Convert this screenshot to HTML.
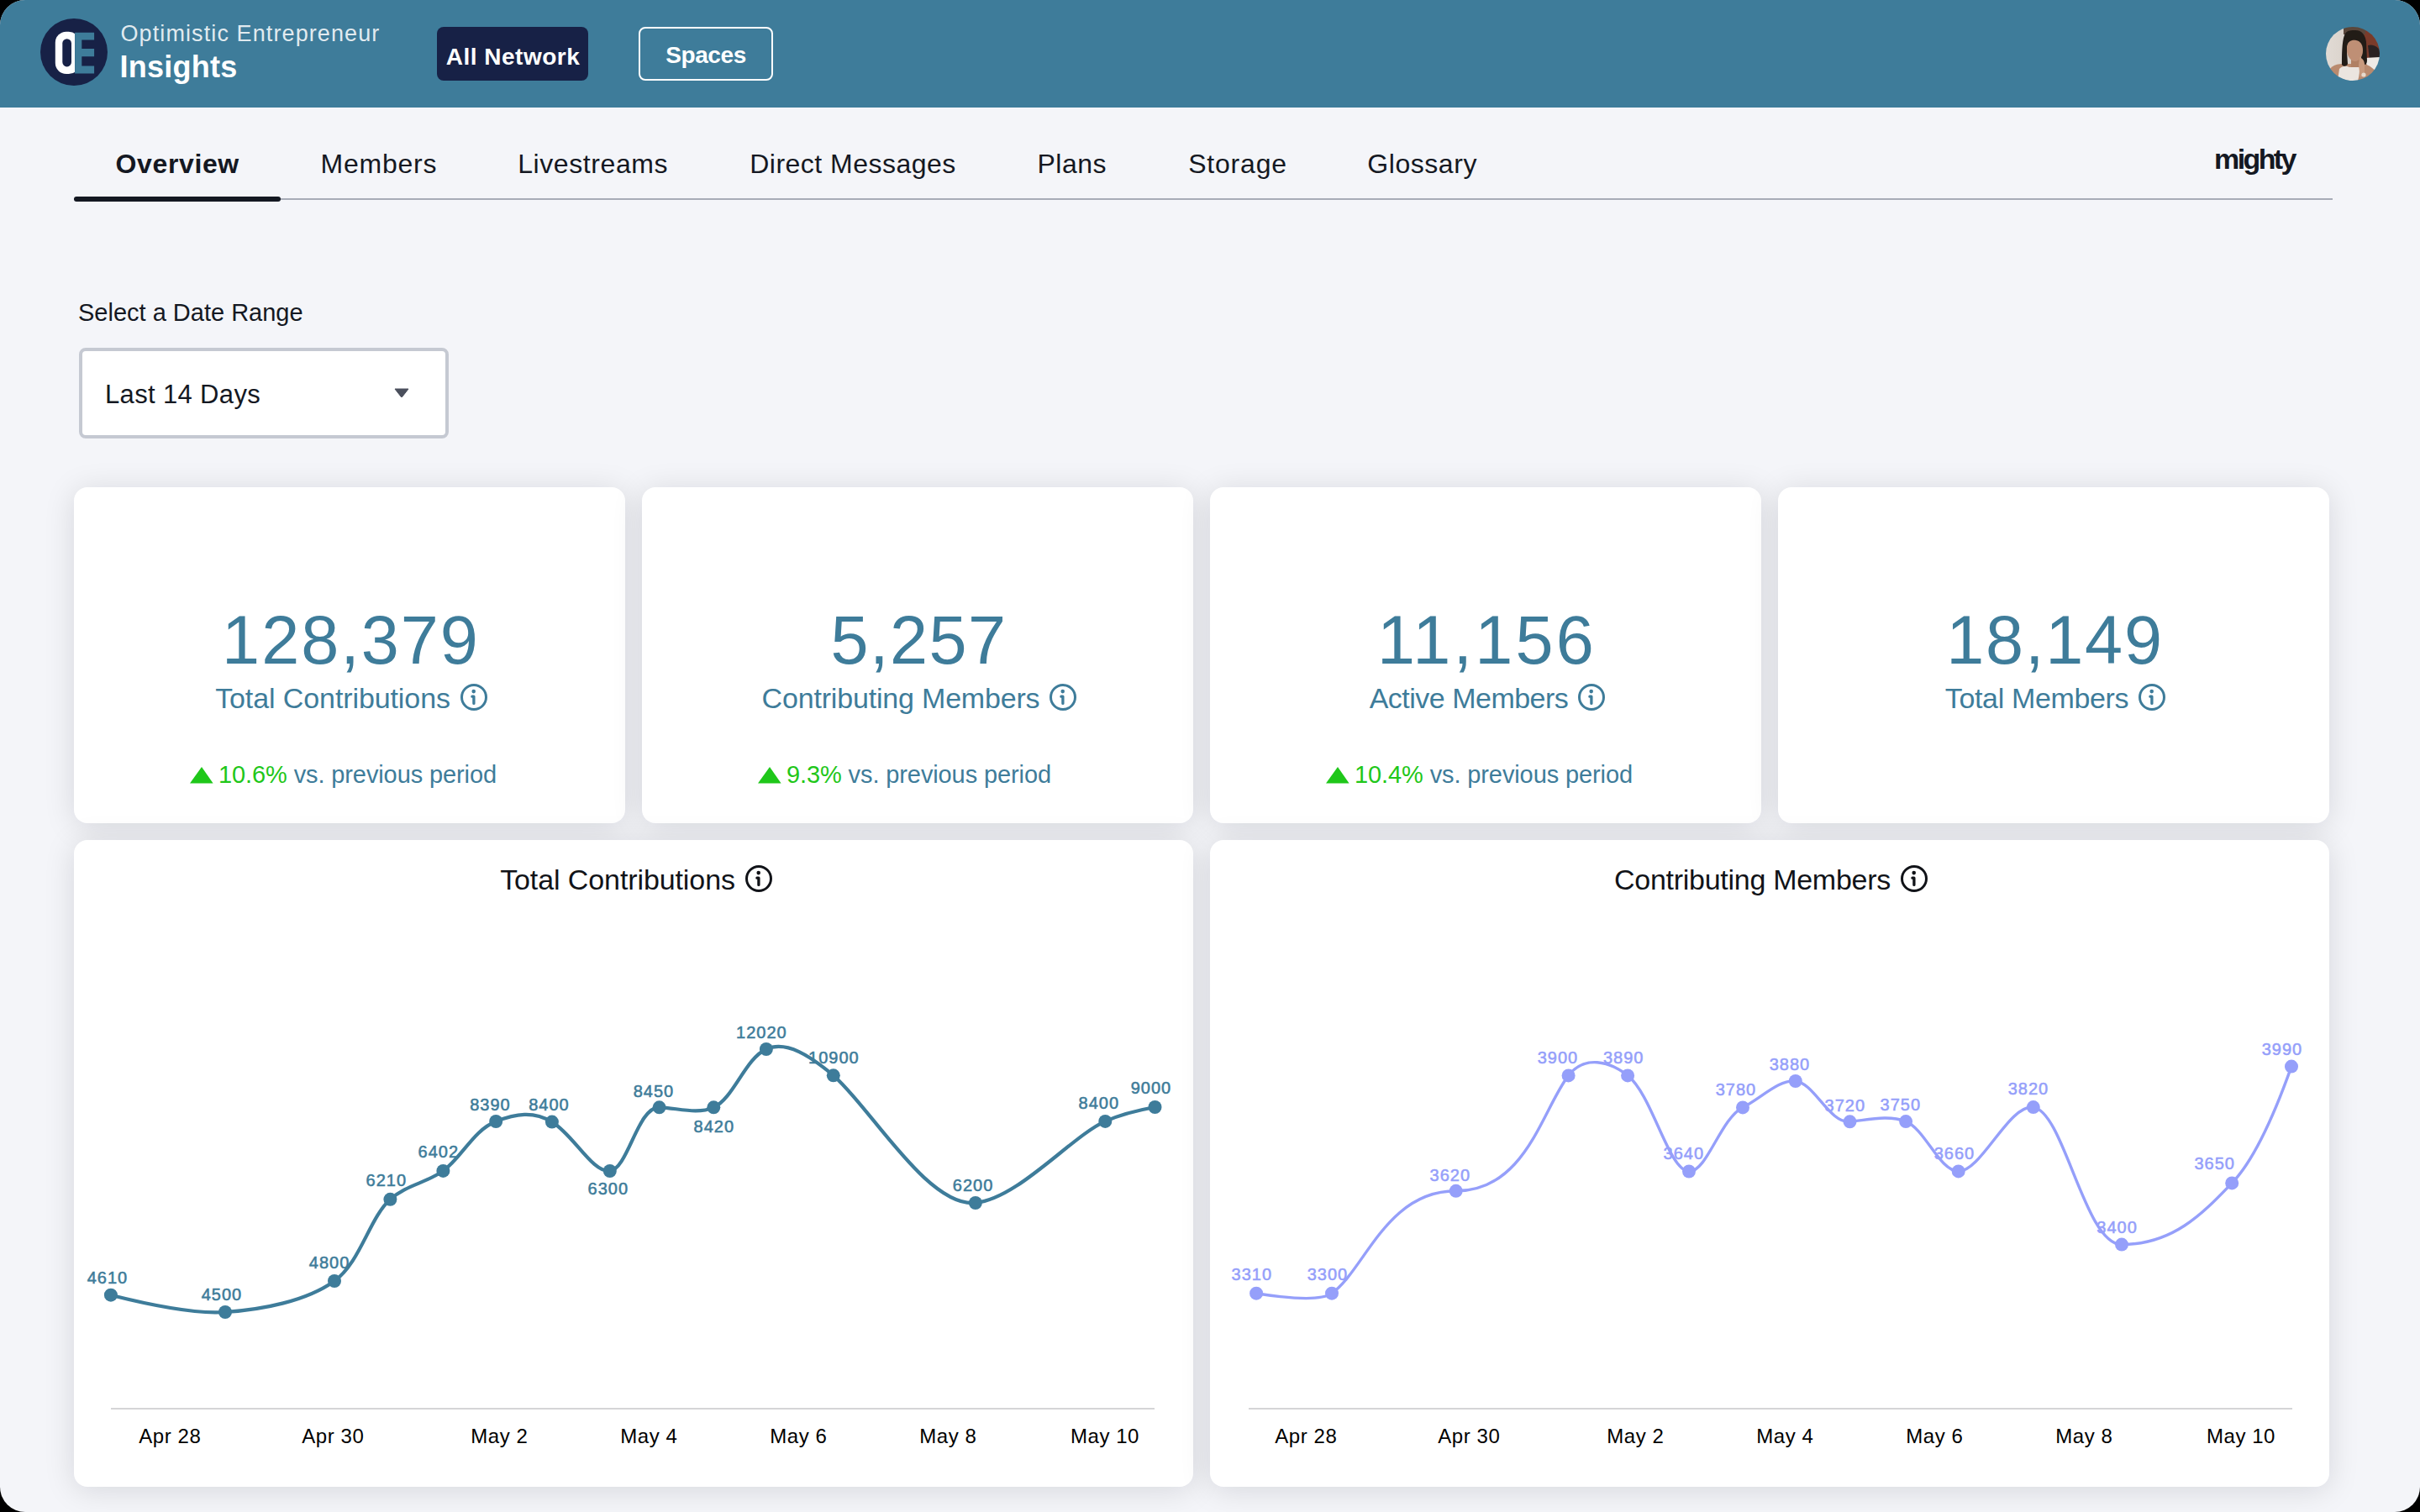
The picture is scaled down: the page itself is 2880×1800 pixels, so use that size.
<!DOCTYPE html>
<html><head><meta charset="utf-8"><title>Insights</title>
<style>
html,body{margin:0;padding:0;background:#000;}
body{width:2880px;height:1800px;overflow:hidden;position:relative;font-family:"Liberation Sans",sans-serif;}
#page{position:absolute;left:0;top:0;width:2880px;height:1800px;border-radius:30px;overflow:hidden;background:#f4f5f9;}
.t{position:absolute;white-space:nowrap;line-height:1;}
.abs{position:absolute;}
.card{position:absolute;background:#fff;border-radius:16px;box-shadow:0 4px 36px rgba(10,12,25,0.125);}
</style></head><body><div id="page">
<div class="abs" style="left:0;top:0;width:2880px;height:128px;background:#3e7c9a;"></div>
<svg class="abs" style="left:48px;top:22px" width="80" height="80" viewBox="48 22 80 80">
<circle cx="88" cy="62" r="40" fill="#172146"/>
<clipPath id="oclip"><rect x="60" y="30" width="29.1" height="64"/></clipPath><rect x="65.8" y="37.8" width="29" height="50.3" rx="13" ry="13" fill="#fff" clip-path="url(#oclip)"/>
<rect x="74.3" y="46.2" width="10.7" height="33.2" rx="5.35" fill="#172146"/>
<path d="M89.1,38.8 H112.1 V47.4 H97.3 V57.9 H112.1 V67.2 H97.3 V78.5 H112.1 V87.6 H89.1 Z" fill="#3e7c9a"/>
</svg>
<div class="t" style="left:143.5px;top:26.7px;font-size:27px;color:rgba(255,255,255,0.87);font-weight:400;letter-spacing:1.1px;">Optimistic Entrepreneur</div>
<div class="t" style="left:142.5px;top:61.5px;font-size:36px;color:#fff;font-weight:700;letter-spacing:0.25px;">Insights</div>
<div class="abs" style="left:520px;top:32px;width:180px;height:64px;border-radius:8px;background:#172146;"></div>
<div class="t" style="left:-389.5px;width:2000px;text-align:center;top:53.8px;font-size:28px;color:#fff;font-weight:700;letter-spacing:0.5px;">All Network</div>
<div class="abs" style="left:760px;top:32px;width:160px;height:64px;box-sizing:border-box;border-radius:8px;border:2px solid #fff;"></div>
<div class="t" style="left:-160.0px;width:2000px;text-align:center;top:51.7px;font-size:28px;color:#fff;font-weight:700;letter-spacing:-0.4px;">Spaces</div>
<svg class="abs" style="left:2768px;top:32px" width="64" height="64" viewBox="0 0 64 64">
<defs><clipPath id="av"><circle cx="32" cy="32" r="32"/></clipPath>
<linearGradient id="avbg" x1="0" y1="0" x2="1" y2="0"><stop offset="0" stop-color="#e2dcd6"/><stop offset="1" stop-color="#cfc5bb"/></linearGradient><filter id="avblur" x="-10%" y="-10%" width="120%" height="120%"><feGaussianBlur stdDeviation="0.7"/></filter></defs>
<g clip-path="url(#av)"><g filter="url(#avblur)">
<rect x="-4" y="-4" width="72" height="72" fill="url(#avbg)"/>
<path d="M36,0 H64 V48 L44,48 Z" fill="#7a3a2c"/>
<rect x="21" y="0" width="26" height="9" fill="#5a463a"/>
<path d="M50,22 C56,20 64,24 64,30 V40 L52,40 Z" fill="#2c2420"/>
<path d="M46,37 L64,36 V52 L50,50 Z" fill="#eeeae6"/>
<path d="M0,58 C4,48 10,44 20,44 L44,44 C52,45 58,50 62,58 L64,64 H0 Z" fill="#b98a6e"/>
<path d="M14,64 L16,50 C20,46 24,46 28,48 L40,48 C40,52 40,58 38,64 Z" fill="#ebe5df"/>
<rect x="30" y="36" width="10" height="12" fill="#b08064"/>
<path d="M22,10 C24,4 30,4 35,4 C43,4 47,10 48,18 L49,40 C49,44 47,46 45,44 L42,42 L42,24 C40,18 36,16 30,17 C26,18 25,24 25,30 L26,44 C25,47 21,48 19,45 C19,34 19,18 22,10 Z" fill="#231c18"/>
<path d="M25,24 C26,17 31,15 36,16 C41,17 44,21 44,28 C44,34 41,40 35,41 C30,41 26,36 25,30 Z" fill="#bf8f74"/>
<path d="M40,36 C43,37 46,40 46,45 L46,58 L41,60 L39,46 Z" fill="#c89a7e"/>
<circle cx="45" cy="57" r="2.6" fill="#e6dace"/>
</g></g></svg>
<div class="t" style="left:137.6px;top:178.9px;font-size:32px;color:#141822;font-weight:700;letter-spacing:0.61px;">Overview</div>
<div class="t" style="left:381.5px;top:178.9px;font-size:32px;color:#141822;font-weight:400;letter-spacing:0.77px;">Members</div>
<div class="t" style="left:616.2px;top:178.9px;font-size:32px;color:#141822;font-weight:400;letter-spacing:0.59px;">Livestreams</div>
<div class="t" style="left:892.2px;top:178.9px;font-size:32px;color:#141822;font-weight:400;letter-spacing:0.49px;">Direct Messages</div>
<div class="t" style="left:1234.5px;top:178.9px;font-size:32px;color:#141822;font-weight:400;letter-spacing:0.48px;">Plans</div>
<div class="t" style="left:1414.2px;top:178.9px;font-size:32px;color:#141822;font-weight:400;letter-spacing:0.8px;">Storage</div>
<div class="t" style="left:1627.3px;top:178.9px;font-size:32px;color:#141822;font-weight:400;letter-spacing:0.55px;">Glossary</div>
<div class="t" style="left:2635.0px;top:171.6px;font-size:34px;color:#141822;font-weight:700;letter-spacing:-2.6px;">mighty</div>
<div class="abs" style="left:88px;top:236px;width:2688px;height:2px;background:#a7acb7;"></div>
<div class="abs" style="left:88px;top:234px;width:246px;height:6px;border-radius:3px;background:#141822;"></div>
<div class="t" style="left:93.0px;top:358.2px;font-size:29px;color:#141822;font-weight:400;letter-spacing:0px;">Select a Date Range</div>
<div class="abs" style="left:94px;top:414px;width:440px;height:108px;box-sizing:border-box;border:4px solid #c5c9d2;border-radius:8px;background:#fff;"></div>
<div class="t" style="left:125.0px;top:454.2px;font-size:31px;color:#141822;font-weight:400;letter-spacing:0.35px;">Last 14 Days</div>
<svg class="abs" style="left:466px;top:459px" width="24" height="18" viewBox="0 0 24 18"><path d="M4,4 H20 L12.8,13.2 Q12,14.2 11.2,13.2 Z" fill="#4a4f5c" stroke="#4a4f5c" stroke-width="1" stroke-linejoin="round"/></svg>
<div class="card" style="left:88px;top:580px;width:656px;height:400px;"></div>
<div class="t" style="left:-582.5px;width:2000px;text-align:center;top:722.4px;font-size:81px;color:#3e7c9a;font-weight:400;letter-spacing:2.0px;">128,379</div>
<div class="t" style="left:-582px;width:2000px;text-align:center;top:814.2px;font-size:34px;color:#3e7c9a;letter-spacing:-0.1px;">Total Contributions<svg style="display:inline-block;vertical-align:-3px;margin-left:12px" width="32" height="32" viewBox="0 0 32 32"><circle cx="16" cy="16" r="14.5" fill="none" stroke="#3e7c9a" stroke-width="3"/><circle cx="15.7" cy="9.1" r="2.3" fill="#3e7c9a"/><path d="M13.9,15.2 H15.9 V23.4" fill="none" stroke="#3e7c9a" stroke-width="3.3" stroke-linecap="round" stroke-linejoin="round"/></svg></div>
<svg class="abs" style="left:226px;top:913px" width="28" height="20" viewBox="0 0 28 20"><path d="M14,0 L27.6,19.5 H0 Z" fill="#1fc71a"/></svg>
<div class="t" style="left:260.0px;top:908.0px;font-size:29px;color:#3e7c9a;font-weight:400;letter-spacing:-0.11px;"><span style="color:#1fc71a">10.6%</span> vs. previous period</div>
<div class="card" style="left:764px;top:580px;width:656px;height:400px;"></div>
<div class="t" style="left:93.5px;width:2000px;text-align:center;top:722.4px;font-size:81px;color:#3e7c9a;font-weight:400;letter-spacing:1.5px;">5,257</div>
<div class="t" style="left:94px;width:2000px;text-align:center;top:814.2px;font-size:34px;color:#3e7c9a;letter-spacing:-0.18px;">Contributing Members<svg style="display:inline-block;vertical-align:-3px;margin-left:12px" width="32" height="32" viewBox="0 0 32 32"><circle cx="16" cy="16" r="14.5" fill="none" stroke="#3e7c9a" stroke-width="3"/><circle cx="15.7" cy="9.1" r="2.3" fill="#3e7c9a"/><path d="M13.9,15.2 H15.9 V23.4" fill="none" stroke="#3e7c9a" stroke-width="3.3" stroke-linecap="round" stroke-linejoin="round"/></svg></div>
<svg class="abs" style="left:902px;top:913px" width="28" height="20" viewBox="0 0 28 20"><path d="M14,0 L27.6,19.5 H0 Z" fill="#1fc71a"/></svg>
<div class="t" style="left:936.0px;top:908.0px;font-size:29px;color:#3e7c9a;font-weight:400;letter-spacing:-0.11px;"><span style="color:#1fc71a">9.3%</span> vs. previous period</div>
<div class="card" style="left:1440px;top:580px;width:656px;height:400px;"></div>
<div class="t" style="left:769.5px;width:2000px;text-align:center;top:722.4px;font-size:81px;color:#3e7c9a;font-weight:400;letter-spacing:3.2px;">11,156</div>
<div class="t" style="left:770px;width:2000px;text-align:center;top:814.2px;font-size:34px;color:#3e7c9a;letter-spacing:-0.5px;">Active Members<svg style="display:inline-block;vertical-align:-3px;margin-left:12px" width="32" height="32" viewBox="0 0 32 32"><circle cx="16" cy="16" r="14.5" fill="none" stroke="#3e7c9a" stroke-width="3"/><circle cx="15.7" cy="9.1" r="2.3" fill="#3e7c9a"/><path d="M13.9,15.2 H15.9 V23.4" fill="none" stroke="#3e7c9a" stroke-width="3.3" stroke-linecap="round" stroke-linejoin="round"/></svg></div>
<svg class="abs" style="left:1578px;top:913px" width="28" height="20" viewBox="0 0 28 20"><path d="M14,0 L27.6,19.5 H0 Z" fill="#1fc71a"/></svg>
<div class="t" style="left:1612.0px;top:908.0px;font-size:29px;color:#3e7c9a;font-weight:400;letter-spacing:-0.11px;"><span style="color:#1fc71a">10.4%</span> vs. previous period</div>
<div class="card" style="left:2116px;top:580px;width:656px;height:400px;"></div>
<div class="t" style="left:1445.5px;width:2000px;text-align:center;top:722.4px;font-size:81px;color:#3e7c9a;font-weight:400;letter-spacing:1.8px;">18,149</div>
<div class="t" style="left:1446px;width:2000px;text-align:center;top:814.2px;font-size:34px;color:#3e7c9a;letter-spacing:-0.35px;">Total Members<svg style="display:inline-block;vertical-align:-3px;margin-left:12px" width="32" height="32" viewBox="0 0 32 32"><circle cx="16" cy="16" r="14.5" fill="none" stroke="#3e7c9a" stroke-width="3"/><circle cx="15.7" cy="9.1" r="2.3" fill="#3e7c9a"/><path d="M13.9,15.2 H15.9 V23.4" fill="none" stroke="#3e7c9a" stroke-width="3.3" stroke-linecap="round" stroke-linejoin="round"/></svg></div>
<div class="card" style="left:88px;top:1000px;width:1332px;height:770px;"></div>
<div class="card" style="left:1440px;top:1000px;width:1332px;height:770px;"></div>
<div class="t" style="left:-243px;width:2000px;text-align:center;top:1030.1px;font-size:34px;color:#111318;letter-spacing:-0.1px;">Total Contributions<svg style="display:inline-block;vertical-align:-3px;margin-left:12px" width="32" height="32" viewBox="0 0 32 32"><circle cx="16" cy="16" r="14.5" fill="none" stroke="#111318" stroke-width="3"/><circle cx="15.7" cy="9.1" r="2.3" fill="#111318"/><path d="M13.9,15.2 H15.9 V23.4" fill="none" stroke="#111318" stroke-width="3.3" stroke-linecap="round" stroke-linejoin="round"/></svg></div>
<div class="t" style="left:1107.5px;width:2000px;text-align:center;top:1030.1px;font-size:34px;color:#111318;letter-spacing:-0.28px;">Contributing Members<svg style="display:inline-block;vertical-align:-3px;margin-left:12px" width="32" height="32" viewBox="0 0 32 32"><circle cx="16" cy="16" r="14.5" fill="none" stroke="#111318" stroke-width="3"/><circle cx="15.7" cy="9.1" r="2.3" fill="#111318"/><path d="M13.9,15.2 H15.9 V23.4" fill="none" stroke="#111318" stroke-width="3.3" stroke-linecap="round" stroke-linejoin="round"/></svg></div>
<svg class="abs" style="left:0;top:0" width="2880" height="1800" viewBox="0 0 2880 1800"><rect x="132" y="1676" width="1242" height="2" fill="#d5d5d7"/><rect x="1486" y="1676" width="1242" height="2" fill="#d5d5d7"/><text x="128.0" y="1528.2" text-anchor="middle" font-family="Liberation Sans" font-size="20" letter-spacing="1" fill="#3e7c9a" stroke="#3e7c9a" stroke-width="0.55">4610</text><text x="263.9" y="1547.7" text-anchor="middle" font-family="Liberation Sans" font-size="20" letter-spacing="1" fill="#3e7c9a" stroke="#3e7c9a" stroke-width="0.55">4500</text><text x="392.1" y="1509.7" text-anchor="middle" font-family="Liberation Sans" font-size="20" letter-spacing="1" fill="#3e7c9a" stroke="#3e7c9a" stroke-width="0.55">4800</text><text x="459.8" y="1411.9" text-anchor="middle" font-family="Liberation Sans" font-size="20" letter-spacing="1" fill="#3e7c9a" stroke="#3e7c9a" stroke-width="0.55">6210</text><text x="521.8" y="1377.8" text-anchor="middle" font-family="Liberation Sans" font-size="20" letter-spacing="1" fill="#3e7c9a" stroke="#3e7c9a" stroke-width="0.55">6402</text><text x="583.5" y="1321.7" text-anchor="middle" font-family="Liberation Sans" font-size="20" letter-spacing="1" fill="#3e7c9a" stroke="#3e7c9a" stroke-width="0.55">8390</text><text x="653.5" y="1321.7" text-anchor="middle" font-family="Liberation Sans" font-size="20" letter-spacing="1" fill="#3e7c9a" stroke="#3e7c9a" stroke-width="0.55">8400</text><text x="723.8" y="1421.8" text-anchor="middle" font-family="Liberation Sans" font-size="20" letter-spacing="1" fill="#3e7c9a" stroke="#3e7c9a" stroke-width="0.55">6300</text><text x="777.9" y="1305.8" text-anchor="middle" font-family="Liberation Sans" font-size="20" letter-spacing="1" fill="#3e7c9a" stroke="#3e7c9a" stroke-width="0.55">8450</text><text x="849.8" y="1347.9" text-anchor="middle" font-family="Liberation Sans" font-size="20" letter-spacing="1" fill="#3e7c9a" stroke="#3e7c9a" stroke-width="0.55">8420</text><text x="906.4" y="1235.8" text-anchor="middle" font-family="Liberation Sans" font-size="20" letter-spacing="1" fill="#3e7c9a" stroke="#3e7c9a" stroke-width="0.55">12020</text><text x="992.4" y="1265.7" text-anchor="middle" font-family="Liberation Sans" font-size="20" letter-spacing="1" fill="#3e7c9a" stroke="#3e7c9a" stroke-width="0.55">10900</text><text x="1158.1" y="1417.7" text-anchor="middle" font-family="Liberation Sans" font-size="20" letter-spacing="1" fill="#3e7c9a" stroke="#3e7c9a" stroke-width="0.55">6200</text><text x="1307.8" y="1319.6" text-anchor="middle" font-family="Liberation Sans" font-size="20" letter-spacing="1" fill="#3e7c9a" stroke="#3e7c9a" stroke-width="0.55">8400</text><text x="1369.9" y="1302.0" text-anchor="middle" font-family="Liberation Sans" font-size="20" letter-spacing="1" fill="#3e7c9a" stroke="#3e7c9a" stroke-width="0.55">9000</text><path d="M131.90,1541.70Q223.46,1564.88 268.00,1562.00C312.14,1559.14 364.81,1548.91 398.00,1525.00C428.97,1502.68 439.57,1450.14 464.40,1427.80C483.76,1410.39 507.31,1408.35 527.40,1393.90C549.43,1378.05 563.48,1345.43 590.20,1335.00C613.72,1325.82 634.72,1322.29 656.90,1335.60C682.71,1351.08 704.77,1396.19 725.80,1394.00C747.46,1391.75 758.72,1317.52 784.60,1318.30C805.86,1318.94 829.64,1327.03 849.30,1318.30C872.92,1307.81 886.76,1260.32 911.90,1249.00C936.00,1238.15 965.23,1257.72 991.80,1280.30C1035.02,1317.04 1104.05,1437.69 1160.90,1432.00C1211.84,1426.91 1274.90,1352.93 1315.30,1334.90Q1338.77,1324.43 1374.50,1318.00" fill="none" stroke="#3e7c9a" stroke-width="4.2"/><circle cx="131.9" cy="1541.7" r="8" fill="#3e7c9a"/><circle cx="268" cy="1562" r="8" fill="#3e7c9a"/><circle cx="398" cy="1525" r="8" fill="#3e7c9a"/><circle cx="464.4" cy="1427.8" r="8" fill="#3e7c9a"/><circle cx="527.4" cy="1393.9" r="8" fill="#3e7c9a"/><circle cx="590.2" cy="1335" r="8" fill="#3e7c9a"/><circle cx="656.9" cy="1335.6" r="8" fill="#3e7c9a"/><circle cx="725.8" cy="1394" r="8" fill="#3e7c9a"/><circle cx="784.6" cy="1318.3" r="8" fill="#3e7c9a"/><circle cx="849.3" cy="1318.3" r="8" fill="#3e7c9a"/><circle cx="911.9" cy="1249" r="8" fill="#3e7c9a"/><circle cx="991.8" cy="1280.3" r="8" fill="#3e7c9a"/><circle cx="1160.9" cy="1432" r="8" fill="#3e7c9a"/><circle cx="1315.3" cy="1334.9" r="8" fill="#3e7c9a"/><circle cx="1374.5" cy="1318" r="8" fill="#3e7c9a"/><text x="1489.8" y="1524.0" text-anchor="middle" font-family="Liberation Sans" font-size="20" letter-spacing="1" fill="#959ffa" stroke="#959ffa" stroke-width="0.55">3310</text><text x="1580.0" y="1524.0" text-anchor="middle" font-family="Liberation Sans" font-size="20" letter-spacing="1" fill="#959ffa" stroke="#959ffa" stroke-width="0.55">3300</text><text x="1725.8" y="1406.0" text-anchor="middle" font-family="Liberation Sans" font-size="20" letter-spacing="1" fill="#959ffa" stroke="#959ffa" stroke-width="0.55">3620</text><text x="1854.0" y="1266.0" text-anchor="middle" font-family="Liberation Sans" font-size="20" letter-spacing="1" fill="#959ffa" stroke="#959ffa" stroke-width="0.55">3900</text><text x="1932.2" y="1265.5" text-anchor="middle" font-family="Liberation Sans" font-size="20" letter-spacing="1" fill="#959ffa" stroke="#959ffa" stroke-width="0.55">3890</text><text x="2003.8" y="1379.6" text-anchor="middle" font-family="Liberation Sans" font-size="20" letter-spacing="1" fill="#959ffa" stroke="#959ffa" stroke-width="0.55">3640</text><text x="2065.9" y="1303.6" text-anchor="middle" font-family="Liberation Sans" font-size="20" letter-spacing="1" fill="#959ffa" stroke="#959ffa" stroke-width="0.55">3780</text><text x="2129.9" y="1273.8" text-anchor="middle" font-family="Liberation Sans" font-size="20" letter-spacing="1" fill="#959ffa" stroke="#959ffa" stroke-width="0.55">3880</text><text x="2195.8" y="1323.4" text-anchor="middle" font-family="Liberation Sans" font-size="20" letter-spacing="1" fill="#959ffa" stroke="#959ffa" stroke-width="0.55">3720</text><text x="2261.8" y="1321.6" text-anchor="middle" font-family="Liberation Sans" font-size="20" letter-spacing="1" fill="#959ffa" stroke="#959ffa" stroke-width="0.55">3750</text><text x="2325.9" y="1379.5" text-anchor="middle" font-family="Liberation Sans" font-size="20" letter-spacing="1" fill="#959ffa" stroke="#959ffa" stroke-width="0.55">3660</text><text x="2413.9" y="1303.4" text-anchor="middle" font-family="Liberation Sans" font-size="20" letter-spacing="1" fill="#959ffa" stroke="#959ffa" stroke-width="0.55">3820</text><text x="2519.6" y="1467.5" text-anchor="middle" font-family="Liberation Sans" font-size="20" letter-spacing="1" fill="#959ffa" stroke="#959ffa" stroke-width="0.55">3400</text><text x="2635.7" y="1391.8" text-anchor="middle" font-family="Liberation Sans" font-size="20" letter-spacing="1" fill="#959ffa" stroke="#959ffa" stroke-width="0.55">3650</text><text x="2715.9" y="1256.0" text-anchor="middle" font-family="Liberation Sans" font-size="20" letter-spacing="1" fill="#959ffa" stroke="#959ffa" stroke-width="0.55">3990</text><path d="M1495.10,1539.70Q1568.70,1551.43 1585.00,1539.70C1624.64,1511.16 1649.80,1417.80 1732.70,1417.80C1815.68,1417.80 1835.41,1320.94 1866.60,1280.40C1885.50,1255.82 1915.60,1263.20 1937.10,1280.40C1966.90,1304.24 1985.38,1392.89 2010.00,1394.50C2031.10,1395.88 2047.49,1331.66 2074.00,1318.40C2096.28,1307.26 2116.26,1285.17 2136.80,1287.00C2158.82,1288.96 2177.32,1337.72 2201.50,1335.30C2223.46,1333.10 2247.71,1327.01 2268.10,1335.10C2291.31,1344.31 2307.71,1393.82 2330.70,1394.40C2357.51,1395.07 2391.18,1313.91 2419.80,1318.10C2456.65,1323.50 2480.80,1481.60 2525.00,1481.60C2587.17,1481.60 2622.65,1443.22 2656.20,1408.40Q2690.36,1372.94 2727.00,1269.60" fill="none" stroke="#959ffa" stroke-width="3.4"/><circle cx="1495.1" cy="1539.7" r="8" fill="#959ffa"/><circle cx="1585" cy="1539.7" r="8" fill="#959ffa"/><circle cx="1732.7" cy="1417.8" r="8" fill="#959ffa"/><circle cx="1866.6" cy="1280.4" r="8" fill="#959ffa"/><circle cx="1937.1" cy="1280.4" r="8" fill="#959ffa"/><circle cx="2010" cy="1394.5" r="8" fill="#959ffa"/><circle cx="2074" cy="1318.4" r="8" fill="#959ffa"/><circle cx="2136.8" cy="1287" r="8" fill="#959ffa"/><circle cx="2201.5" cy="1335.3" r="8" fill="#959ffa"/><circle cx="2268.1" cy="1335.1" r="8" fill="#959ffa"/><circle cx="2330.7" cy="1394.4" r="8" fill="#959ffa"/><circle cx="2419.8" cy="1318.1" r="8" fill="#959ffa"/><circle cx="2525" cy="1481.6" r="8" fill="#959ffa"/><circle cx="2656.2" cy="1408.4" r="8" fill="#959ffa"/><circle cx="2727" cy="1269.6" r="8" fill="#959ffa"/></svg>
<div class="t" style="left:-797.7px;width:2000px;text-align:center;top:1697.9px;font-size:24px;color:#000;font-weight:400;letter-spacing:0.55px;">Apr 28</div>
<div class="t" style="left:-603.7px;width:2000px;text-align:center;top:1697.9px;font-size:24px;color:#000;font-weight:400;letter-spacing:0.55px;">Apr 30</div>
<div class="t" style="left:-405.7px;width:2000px;text-align:center;top:1697.9px;font-size:24px;color:#000;font-weight:400;letter-spacing:0.55px;">May 2</div>
<div class="t" style="left:-227.7px;width:2000px;text-align:center;top:1697.9px;font-size:24px;color:#000;font-weight:400;letter-spacing:0.55px;">May 4</div>
<div class="t" style="left:-49.7px;width:2000px;text-align:center;top:1697.9px;font-size:24px;color:#000;font-weight:400;letter-spacing:0.55px;">May 6</div>
<div class="t" style="left:128.3px;width:2000px;text-align:center;top:1697.9px;font-size:24px;color:#000;font-weight:400;letter-spacing:0.55px;">May 8</div>
<div class="t" style="left:315.0px;width:2000px;text-align:center;top:1697.9px;font-size:24px;color:#000;font-weight:400;letter-spacing:0.55px;">May 10</div>
<div class="t" style="left:554.3px;width:2000px;text-align:center;top:1697.9px;font-size:24px;color:#000;font-weight:400;letter-spacing:0.55px;">Apr 28</div>
<div class="t" style="left:748.3px;width:2000px;text-align:center;top:1697.9px;font-size:24px;color:#000;font-weight:400;letter-spacing:0.55px;">Apr 30</div>
<div class="t" style="left:946.3px;width:2000px;text-align:center;top:1697.9px;font-size:24px;color:#000;font-weight:400;letter-spacing:0.55px;">May 2</div>
<div class="t" style="left:1124.3px;width:2000px;text-align:center;top:1697.9px;font-size:24px;color:#000;font-weight:400;letter-spacing:0.55px;">May 4</div>
<div class="t" style="left:1302.3px;width:2000px;text-align:center;top:1697.9px;font-size:24px;color:#000;font-weight:400;letter-spacing:0.55px;">May 6</div>
<div class="t" style="left:1480.3px;width:2000px;text-align:center;top:1697.9px;font-size:24px;color:#000;font-weight:400;letter-spacing:0.55px;">May 8</div>
<div class="t" style="left:1667.0px;width:2000px;text-align:center;top:1697.9px;font-size:24px;color:#000;font-weight:400;letter-spacing:0.55px;">May 10</div>
</div></body></html>
